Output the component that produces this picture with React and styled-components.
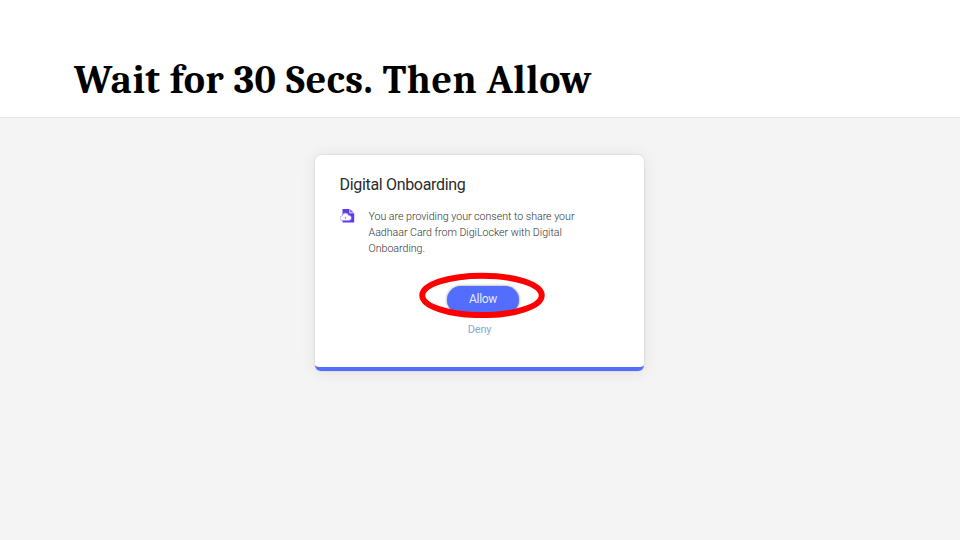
import React from 'react';
import styled, { createGlobalStyle } from 'styled-components';

const GlobalStyle = createGlobalStyle`
  * { box-sizing: border-box; }
  body { margin: 0; background: #f4f4f4; }
`;

const Slide = styled.main`
  width: 960px;
  height: 540px;
  overflow: hidden;
  display: flex;
  flex-direction: column;
  align-items: center;
  background: #f4f4f4;
  font-family: Roboto, sans-serif;
`;

const Header = styled.header`
  width: 100%;
  height: 118px;
  flex: none;
  padding: 55px 0 0 74px;
  background: #fff;
  border-bottom: 1px solid #e6e6e6;
`;

const Title = styled.h1`
  margin: 0;
  font: 700 40px/50px Cambria, Caladea, 'Liberation Serif', serif;
  letter-spacing: 0.55px;
  word-spacing: 0.1px;
  color: #000;
  white-space: nowrap;
`;

const Card = styled.section`
  width: 329px;
  height: 215.5px;
  margin: 37px 2px 0 0;
  padding: 18px 24px 0 25px;
  background: #fff;
  border-bottom: 4px solid #536dfe;
  border-radius: 6px;
  box-shadow: 0 0 2px rgba(0, 0, 0, 0.16), 0 1px 16px rgba(0, 0, 0, 0.08);
`;

const CardTitle = styled.h2`
  margin: 0;
  font-size: 16px;
  line-height: 24px;
  font-weight: 400;
  letter-spacing: -0.32px;
  color: #2b2b2b;
`;

const Consent = styled.div`
  display: flex;
  gap: 14px;
  margin-top: 12px;
`;

const ConsentIcon = styled.svg`
  width: 15px;
  height: 14px;
  flex: none;
`;

const ConsentText = styled.p`
  margin: 0;
  font-size: 10.67px;
  line-height: 16px;
  font-weight: 300;
  letter-spacing: -0.03px;
  color: #333;
  white-space: nowrap;
`;

const Actions = styled.div`
  position: relative;
  display: flex;
  flex-direction: column;
  align-items: center;
  width: 73px;
  margin: 29px 0 0 107px;
`;

const AllowButton = styled.button`
  width: 72px;
  height: 28px;
  padding: 0 0 2px;
  border: 0;
  border-radius: 14px;
  background: #536dfe;
  color: #e6eaff;
  font: 400 12px/26px Roboto, sans-serif;
  letter-spacing: -0.3px;
  box-shadow: 0 0 3px rgba(0, 0, 0, 0.45);
`;

const DenyLink = styled.a`
  margin: 8px 7px 0 0;
  font-size: 11px;
  line-height: 16px;
  letter-spacing: -0.2px;
  color: #85abd3;
`;

const Highlight = styled.svg`
  position: absolute;
  left: -28px;
  top: -14px;
  width: 126px;
  height: 46px;
  pointer-events: none;
`;

export default function App() {
  return (
    <Slide>
      <GlobalStyle />
      <Header>
        <Title>Wait for 30 Secs. Then Allow</Title>
      </Header>
      <Card>
        <CardTitle>Digital Onboarding</CardTitle>
        <Consent>
          <ConsentIcon viewBox="0 0 15 14">
            <path d="M2.5 0h6.9v4.2h4.8v9.2H2.5z" fill="#5f38f5" />
            <path d="M10.1.2l3.8 3.2h-3.8z" fill="#7d60f5" />
            <path d="M2.5 11.6a2.4 2.4 0 0 1-.2-4.8 3.2 3.2 0 0 1 6.2-.6 2.7 2.7 0 0 1 .4 5.4z" fill="#fff" stroke="#9a84f7" strokeWidth=".6" />
            <path d="M5.4 7.5v2M4.6 8.8l.8.8.8-.8" fill="none" stroke="#8b70f6" strokeWidth=".7" />
          </ConsentIcon>
          <ConsentText>
            You are providing your consent to share your<br />
            Aadhaar Card from DigiLocker with Digital<br />
            Onboarding.
          </ConsentText>
        </Consent>
        <Actions>
          <AllowButton>Allow</AllowButton>
          <DenyLink>Deny</DenyLink>
          <Highlight viewBox="0 0 126 46">
            <ellipse cx="63" cy="23.4" rx="59.7" ry="19.7" fill="none" stroke="#f00" strokeWidth="6" />
          </Highlight>
        </Actions>
      </Card>
    </Slide>
  );
}
